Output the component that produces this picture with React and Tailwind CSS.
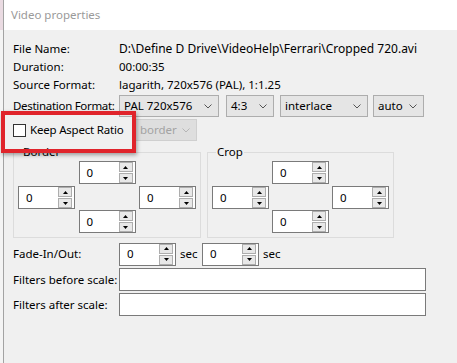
const Chevron = ({ color = "#444" }) => (
  <svg width="8" height="5" viewBox="0 0 8 5" className="flex-shrink-0">
    <path d="M0.5 0.5 L4 4 L7.5 0.5" fill="none" stroke={color} strokeWidth="1" />
  </svg>
);

const Combo = ({ value, width, disabled }) => (
  <div
    className={`h-[22px] flex-shrink-0 flex items-center justify-between pl-[4px] pr-[6px] border ${
      disabled
        ? "bg-[#dedede] border-[#cfcfcf] text-[#a3a3a3]"
        : "bg-[#e5e5e5] border-[#adadad] text-black"
    }`}
    style={{ width }}
  >
    <span className="leading-none whitespace-nowrap">{value}</span>
    <Chevron color={disabled ? "#b5b5b5" : "#555"} />
  </div>
);

const SpinButton = ({ up }) => (
  <div className="h-[10px] w-[14px] border border-[#adadad] bg-[#e8e8e8] flex items-center justify-center">
    <svg width="5" height="3" viewBox="0 0 5 3">
      {up ? <path d="M2.5 0 L5 3 L0 3 Z" fill="#000" /> : <path d="M0 0 L5 0 L2.5 3 Z" fill="#000" />}
    </svg>
  </div>
);

const Spin = ({ value = "0" }) => (
  <div className="w-[57px] h-[23px] flex-shrink-0 flex border border-[#7a7a7a] bg-white">
    <div className="flex-1 flex items-center pl-[7px] leading-none">{value}</div>
    <div className="w-[16px] flex flex-col justify-center gap-[1px] pr-[1px]">
      <SpinButton up />
      <SpinButton />
    </div>
  </div>
);

const GroupBox = ({ title, width }) => (
  <div className="relative h-[86px] border border-[#dcdcdc] px-[4px] pt-[8px]" style={{ width }}>
    <span className="absolute -top-[9px] left-[8px] px-[1px] bg-[#f0f0f0] leading-[16px]">{title}</span>
    <div className="flex justify-center">
      <Spin />
    </div>
    <div className="flex justify-between mt-[2px]">
      <Spin />
      <Spin />
    </div>
    <div className="flex justify-center mt-[1px]">
      <Spin />
    </div>
  </div>
);

const Label = ({ children, tight }) => (
  <span className={`w-[106px] flex-shrink-0 whitespace-nowrap ${tight ? "tracking-[-0.3px]" : ""}`}>{children}</span>
);

const InfoRow = ({ label, value, wide }) => (
  <div className="h-[18px] flex items-center">
    <Label>{label}</Label>
    <span className={`whitespace-nowrap ${wide ? "text-[12px]" : ""}`}>{value}</span>
  </div>
);

export default function App() {
  return (
    <div className="relative w-[457px] h-[363px] flex overflow-hidden bg-[#f0f0f0] text-[11.5px] text-black font-['Noto_Sans','Liberation_Sans',sans-serif]">
      {/* window behind */}
      <div className="w-[3px] flex flex-col bg-[#f4f4f4]">
        <div className="h-[30px] bg-[#eadbe2]" />
      </div>
      <div className="w-px bg-[#a3a3a3]" />

      <div className="flex-1 flex flex-col">
        {/* Title bar */}
        <div className="h-[30px] bg-white flex items-center pl-[7px] text-[#9a9a9a]">Video properties</div>

        {/* Body */}
        <div className="flex-1 pl-[9px] pt-[10px]">
          <InfoRow label="File Name:" value="D:\Define D Drive\VideoHelp\Ferrari\Cropped 720.avi" wide />
          <InfoRow label="Duration:" value="00:00:35" />
          <InfoRow label="Source Format:" value="lagarith, 720x576 (PAL), 1:1.25" />

          <div className="h-[22px] mt-[1px] flex items-center">
            <Label tight>Destination Format:</Label>
            <Combo value="PAL 720x576" width={100} />
            <div className="ml-[7px]">
              <Combo value="4:3" width={48} />
            </div>
            <div className="ml-[6px]">
              <Combo value="interlace" width={88} />
            </div>
            <div className="ml-[5px]">
              <Combo value="auto" width={51} />
            </div>
          </div>

          <div className="h-[24px] mt-[1px] flex items-center">
            <div className="w-[13px] h-[13px] flex-shrink-0 border border-[#333] bg-white" />
            <span className="ml-[4px] w-[105px] flex-shrink-0 whitespace-nowrap tracking-[-0.2px]">Keep Aspect Ratio</span>
            <Combo value="border" width={62} disabled />
          </div>

          <div className="flex gap-[6px] mt-[10px]">
            <GroupBox title="Border" width={188} />
            <GroupBox title="Crop" width={187} />
          </div>

          <div className="h-[22px] mt-[5px] flex items-center">
            <Label>Fade-In/Out:</Label>
            <Spin />
            <span className="ml-[4px] w-[22px]">sec</span>
            <Spin />
            <span className="ml-[4px]">sec</span>
          </div>

          <div className="h-[23px] mt-[3px] flex items-center">
            <Label>Filters before scale:</Label>
            <div className="w-[307px] h-[23px] border border-[#7a7a7a] bg-white" />
          </div>
          <div className="h-[23px] mt-[2px] flex items-center">
            <Label>Filters after scale:</Label>
            <div className="w-[307px] h-[23px] border border-[#7a7a7a] bg-white" />
          </div>
        </div>
      </div>

      {/* red annotation box */}
      <div className="absolute left-[1px] top-[111px] w-[135px] h-[42px] border-[4px] border-[#e0242b] shadow-[1px_2px_4px_rgba(0,0,0,0.35)]" />
    </div>
  );
}
